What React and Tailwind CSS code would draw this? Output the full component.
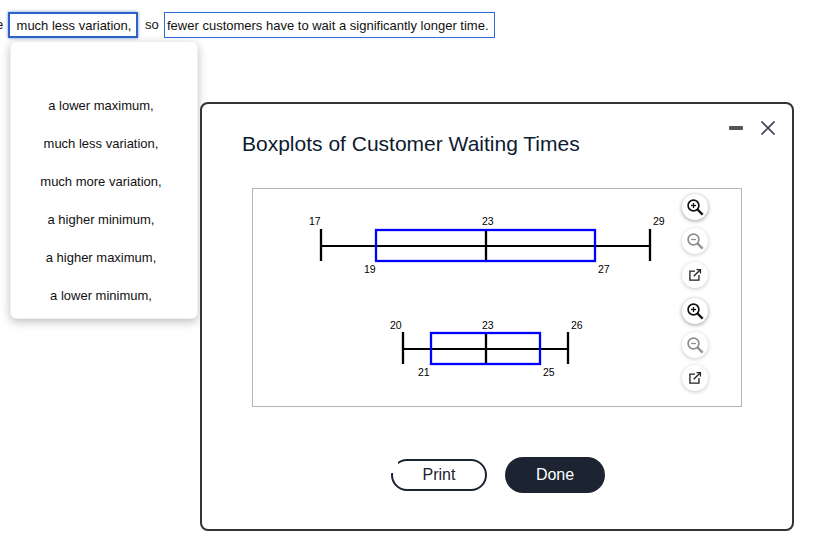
const font = { fontFamily: '"Liberation Sans", Arial, sans-serif' };

function ZoomIcon({ minus, muted }) {
  const c = muted ? "#8f8f8f" : "#111111";
  return (
    <svg width="18" height="18" viewBox="0 0 18 18" fill="none" stroke={c} strokeWidth="1.7">
      <circle cx="7.5" cy="7.5" r="5.4" />
      <path d="M11.5 11.5L16.6 16.6" strokeWidth="2.4" />
      <path d="M5 7.5h5" strokeWidth="1.3" />
      {!minus && <path d="M7.5 5v5" strokeWidth="1.3" />}
    </svg>
  );
}

function LinkIcon() {
  return (
    <svg width="14" height="14" viewBox="0 0 16 16" fill="none" stroke="#222222" strokeWidth="1.5">
      <path d="M8 3.5H2.2v10.3h10.3V8" />
      <path d="M6.5 9.5L13.5 2.5" />
      <path d="M9.8 1.8h4.4v4.4" />
    </svg>
  );
}

function RoundButton({ children, muted }) {
  return (
    <button
      className={
        muted
          ? "w-[26px] h-[26px] rounded-full bg-white flex items-center justify-center shadow-[0_1px_4px_rgba(0,0,0,0.22)]"
          : "w-[26px] h-[26px] rounded-full bg-white flex items-center justify-center shadow-[0_1px_4px_rgba(0,0,0,0.4)]"
      }
    >
      {children}
    </button>
  );
}

function Plot({ y, left, right, q1, q3, labels }) {
  const mid = y + 16;
  return (
    <g>
      <path d={`M${left} ${mid}H${right}`} stroke="#000" strokeWidth="2.2" />
      <path d={`M${left} ${y - 1}v32M${right} ${y - 1}v32M233 ${y}v31`} stroke="#000" strokeWidth="2.3" />
      <rect x={q1} y={y} width={q3 - q1} height="31" fill="none" stroke="#0000ff" strokeWidth="2.3" />
      {labels.map(([t, x, ly]) => (
        <text key={t + x} x={x} y={ly} fontSize="10.5" fill="#000" style={font}>{t}</text>
      ))}
    </g>
  );
}

export default function App() {
  const options = [
    "a lower maximum,",
    "much less variation,",
    "much more variation,",
    "a higher minimum,",
    "a higher maximum,",
    "a lower minimum,",
  ];
  return (
    <div className="relative w-[835px] h-[544px] bg-white overflow-hidden text-[13px] text-[#111111]" style={font}>
      <div className="flex items-center h-[26px] mt-[12px] leading-[26px]">
        <span className="w-[9px] -ml-[4px] mr-[3px] overflow-hidden">e</span>
        <div className="w-[130px] h-[26px] border-2 border-[#2f62c8] shadow-[0_0_3px_rgba(47,98,200,0.7)] flex items-center justify-center whitespace-nowrap pl-[2px] pt-[1px]">
          much less variation,
        </div>
        <span className="ml-[7px] w-[19px]">so</span>
        <div className="w-[331px] h-[26px] border border-[#2f6bd9] flex items-center pl-[2px] pt-[1px] whitespace-nowrap">
          fewer customers have to wait a significantly longer time.
        </div>
      </div>

      <ul className="absolute left-[10px] top-[41px] w-[188px] h-[278px] pt-[45px] pr-[6px] bg-white rounded-md border border-[#eeeeee] shadow-[0_3px_10px_rgba(0,0,0,0.25)]">
        {options.map((o) => (
          <li key={o} className="h-[38px] flex items-center justify-center">{o}</li>
        ))}
      </ul>

      <div className="absolute left-[200px] top-[102px] w-[594px] h-[429px] bg-white border-2 border-[#333333] rounded-lg">
        <div className="flex items-start h-[84px]">
          <h2 className="ml-[40px] mt-[26px] text-[21px] leading-[28px] text-[#0d1b30] whitespace-nowrap">
            Boxplots of Customer Waiting Times
          </h2>
          <div className="ml-auto mt-[17px] mr-[17px] flex items-center gap-[18px]">
            <div className="w-[14px] h-[4px] rounded-[1px] bg-[#555555]" />
            <svg width="14" height="14" viewBox="0 0 14 14" stroke="#3f4a5a" strokeWidth="1.7" fill="none">
              <path d="M0.5 0.5L13.5 13.5M13.5 0.5L0.5 13.5" />
            </svg>
          </div>
        </div>
        <div className="relative ml-[50px] w-[490px] h-[219px] border border-[#b5b5b5] flex">
          <svg width="428" height="217" viewBox="0 0 428 217" className="shrink-0">
            <Plot
              y={41} left={68} right={397} q1={123} q3={342}
              labels={[["17", 56, 36], ["23", 229, 36], ["29", 400, 36], ["19", 111, 84], ["27", 345, 84]]}
            />
            <Plot
              y={144} left={150} right={315} q1={178} q3={287}
              labels={[["20", 137, 140], ["23", 229, 140], ["26", 318, 140], ["21", 165, 187], ["25", 290, 187]]}
            />
          </svg>
          <div className="ml-[1px] pt-[5px] flex flex-col">
            <div className="h-[34px]"><RoundButton><ZoomIcon /></RoundButton></div>
            <div className="h-[34px]"><RoundButton muted><ZoomIcon minus muted /></RoundButton></div>
            <div className="h-[36px]"><RoundButton muted><LinkIcon /></RoundButton></div>
            <div className="h-[34px]"><RoundButton><ZoomIcon /></RoundButton></div>
            <div className="h-[33px]"><RoundButton muted><ZoomIcon minus muted /></RoundButton></div>
            <div className="h-[34px]"><RoundButton muted><LinkIcon /></RoundButton></div>
          </div>
        </div>
        <div className="mt-[50px] flex items-center justify-center gap-[18px] text-[16px] pl-[2px]">
          <button className="relative w-[96px] h-[32px] rounded-full border-2 border-[#1c2331] text-[#1c2331]">
            Print
            <span className="absolute -left-[2px] -top-[2px] w-[7px] h-[14px] bg-white" />
          </button>
          <button className="w-[100px] h-[36px] rounded-full bg-[#1c2331] text-white">Done</button>
        </div>
      </div>
    </div>
  );
}
